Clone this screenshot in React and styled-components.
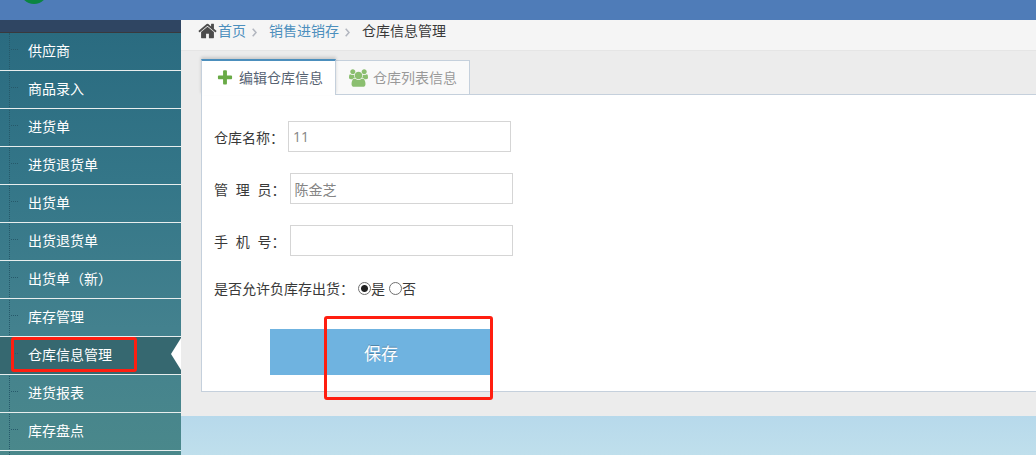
import React, { useState } from "react";
import styled, { createGlobalStyle } from "styled-components";

const menuItems = [
    "供应商",
    "商品录入",
    "进货单",
    "进货退货单",
    "出货单",
    "出货退货单",
    "出货单（新）",
    "库存管理",
    "仓库信息管理",
    "进货报表",
    "库存盘点",
];

function HomeIcon() {
    return (
        <svg width="19" height="20" viewBox="0 0 1664 1792" fill="#4c4c4c" aria-hidden="true">
            <path d="M1408 992v480q0 26-19 45t-45 19h-384v-384h-256v384h-384q-26 0-45-19t-19-45v-480q0-1 .5-3t.5-3l575-474 575 474q1 2 1 6zM1631 923l-62 74q-8 9-21 11h-3q-13 0-21-7l-692-577-692 577q-12 8-24 7-13-2-21-11l-62-74q-8-10-7-23.5t11-21.5l719-599q32-26 76-26t76 26l244 204v-195q0-14 9-23t23-9h192q14 0 23 9t9 23v408l219 182q10 8 11 21.5t-7 23.5z" />
        </svg>
    );
}

function PlusIcon() {
    return (
        <svg width="18" height="18" viewBox="0 0 1792 1792" fill="#69aa46" aria-hidden="true">
            <path d="M1600 736v192q0 40-28 68t-68 28h-416v416q0 40-28 68t-68 28h-192q-40 0-68-28t-28-68v-416h-416q-40 0-68-28t-28-68v-192q0-40 28-68t68-28h416v-416q0-40 28-68t68-28h192q40 0 68 28t28 68v416h416q40 0 68 28t28 68z" />
        </svg>
    );
}

function GroupIcon() {
    return (
        <svg width="19" height="18" viewBox="0 0 1920 1792" fill="#8bbf70" aria-hidden="true">
            <path d="M593 896q-162 5-265 128h-134q-82 0-138-40.5t-56-118.5q0-353 124-353 6 0 43.5 21t97.5 42.5 119 21.5q67 0 133-23-5 37-5 66 0 139 81 256zm1071 637q0 120-73 189.5t-194 69.5h-874q-121 0-194-69.5t-73-189.5q0-53 3.5-103.5t14-109 26.5-108.5 43-97.5 62-81 85.5-53.5 111.5-20q10 0 43 21.5t73 48 107 48 135 21.5 135-21.5 107-48 73-48 43-21.5q61 0 111.5 20t85.5 53.5 62 81 43 97.5 26.5 108.5 14 109 3.5 103.5zm-1024-1277q0 106-75 181t-181 75-181-75-75-181 75-181 181-75 181 75 75 181zm704 384q0 159-112.5 271.5t-271.5 112.5-271.5-112.5-112.5-271.5 112.5-271.5 271.5-112.5 271.5 112.5 112.5 271.5zm576 225q0 78-56 118.5t-138 40.5h-134q-103-123-265-128 81-117 81-256 0-29-5-66 66 23 133 23 59 0 119-21.5t97.5-42.5 43.5-21q124 0 124 353zm-128-609q0 106-75 181t-181 75-181-75-75-181 75-181 181-75 181 75 75 181z" />
        </svg>
    );
}

function Separator() {
    return (
        <SeparatorIcon width="5" height="9" viewBox="0 0 5 9" aria-hidden="true">
            <path d="M0.7 0.7L4 4.5L0.7 8.3" fill="none" stroke="#b2b6bf" strokeWidth="1.5" />
        </SeparatorIcon>
    );
}

function App() {
    const [name, setName] = useState("11");
    const [manager, setManager] = useState("陈金芝");
    const [phone, setPhone] = useState("");
    const [negative, setNegative] = useState("yes");

    return (
        <Page>
            <GlobalStyle />
            <TopBar>
                <svg width="28" height="4" viewBox="0 0 28 4" aria-hidden="true">
                    <circle cx="14" cy="-10" r="14" fill="#0b8540" />
                </svg>
            </TopBar>
            <Body>
                <Sidebar>
                    <SidebarHead />
                    <Menu>
                        {menuItems.map((item) => (
                            <MenuItem key={item} $active={item === "仓库信息管理"}>
                                <MenuLink href="#">{item}</MenuLink>
                                {item === "仓库信息管理" && <MenuMark />}
                            </MenuItem>
                        ))}
                    </Menu>
                </Sidebar>
                <Main>
                    <Breadcrumb>
                        <HomeIcon />
                        <a href="#">首页</a>
                        <Separator />
                        <a href="#">销售进销存</a>
                        <Separator />
                        <span>仓库信息管理</span>
                    </Breadcrumb>
                    <Content>
                        <Tabs>
                            <Tab type="button" $active>
                                <PlusIcon />
                                编辑仓库信息
                            </Tab>
                            <Tab type="button">
                                <GroupIcon />
                                仓库列表信息
                            </Tab>
                        </Tabs>
                        <Panel onSubmit={(e) => e.preventDefault()}>
                            <Field>
                                <label htmlFor="name">仓库名称：</label>
                                <TextInput id="name" value={name} onChange={(e) => setName(e.target.value)} />
                            </Field>
                            <Field>
                                <label htmlFor="manager">管&nbsp;&nbsp;理&nbsp;&nbsp;员：</label>
                                <TextInput id="manager" value={manager} onChange={(e) => setManager(e.target.value)} />
                            </Field>
                            <Field>
                                <label htmlFor="phone">手&nbsp;&nbsp;机&nbsp;&nbsp;号：</label>
                                <TextInput id="phone" value={phone} onChange={(e) => setPhone(e.target.value)} />
                            </Field>
                            <RadioField role="radiogroup" aria-labelledby="negative">
                                <span id="negative">是否允许负库存出货：</span>
                                <RadioLabel>
                                    <Radio name="negative" checked={negative === "yes"} onChange={() => setNegative("yes")} />
                                    是
                                </RadioLabel>
                                <RadioLabel>
                                    <Radio name="negative" checked={negative === "no"} onChange={() => setNegative("no")} />
                                    否
                                </RadioLabel>
                            </RadioField>
                            <Actions>
                                <SaveButton type="submit">保存</SaveButton>
                                <SaveMark />
                            </Actions>
                        </Panel>
                    </Content>
                    <Footer />
                </Main>
            </Body>
        </Page>
    );
}

export default App;

const GlobalStyle = createGlobalStyle`
    * {
        box-sizing: border-box;
    }
    body {
        margin: 0;
        color: #393939;
        font-family: "Open Sans", "Noto Sans CJK SC", sans-serif;
        font-size: 14px;
        line-height: 20px;
    }
    a {
        color: #4c8fbd;
        text-decoration: none;
    }
    button, input {
        font: inherit;
    }
`;

const Page = styled.div`
    display: flex;
    flex-direction: column;
    min-height: 100vh;
`;

const TopBar = styled.header`
    display: flex;
    align-items: flex-start;
    flex-shrink: 0;
    height: 20px;
    padding-left: 20px;
    background: #4f7cb8;
`;

const Body = styled.div`
    display: flex;
    flex: 1;
`;

const Sidebar = styled.nav`
    display: flex;
    flex-direction: column;
    flex-shrink: 0;
    width: 181px;
`;

const SidebarHead = styled.div`
    flex-shrink: 0;
    height: 13px;
    background: #2f4562;
    border-bottom: 1px solid #39393d;
`;

const Menu = styled.ul`
    position: relative;
    flex: 1;
    margin: 0;
    padding: 0;
    list-style: none;
    background: linear-gradient(#2a6b80, #347688 35%, #43818e 70%, #4a888b);

    &::before {
        content: "";
        position: absolute;
        top: 0;
        bottom: 0;
        left: 9px;
        border-left: 1px dotted #26596a;
    }
`;

const MenuItem = styled.li`
    position: relative;
    height: 38px;
    border-bottom: 1px solid #e8eeee;
    background: ${(props) => (props.$active ? "#366870" : "transparent")};

    &::before {
        content: "";
        position: absolute;
        top: 16px;
        left: 11px;
        width: 7px;
        border-top: 1px dotted #26596a;
    }

    &::after {
        content: "";
        display: ${(props) => (props.$active ? "block" : "none")};
        position: absolute;
        top: 1px;
        right: 0;
        border: solid transparent;
        border-width: 16px 10px 16px 0;
        border-right-color: #fff;
    }
`;

const MenuLink = styled.a`
    display: block;
    padding: 8px 0 9px 28px;
    color: #fff;
`;

const MenuMark = styled.div`
    position: absolute;
    top: 0;
    left: 11px;
    width: 126px;
    height: 35px;
    border: 3px solid #ff1e10;
    border-radius: 3px;
    pointer-events: none;
`;

const Main = styled.main`
    display: flex;
    flex-direction: column;
    flex: 1;
    min-width: 0;
    background: #ececec;
`;

const Breadcrumb = styled.nav`
    display: flex;
    align-items: center;
    flex-shrink: 0;
    height: 31px;
    padding: 0 0 8px 17px;
    background: #f5f5f5;
    border-bottom: 1px solid #e5e5e5;

    & a:first-of-type {
        margin-left: 1px;
    }
`;

const SeparatorIcon = styled.svg`
    margin: 2px 12px 0 6px;
`;

const Content = styled.div`
    padding: 8px 0 24px 20px;
`;

const Tabs = styled.div`
    display: flex;
    align-items: flex-end;
`;

const Tab = styled.button`
    position: relative;
    display: flex;
    align-items: center;
    gap: 5px;
    height: ${(props) => (props.$active ? "36px" : "34px")};
    margin-bottom: ${(props) => (props.$active ? "-1px" : "0")};
    padding: ${(props) => (props.$active ? "0 12px 0 14px" : "1px 12px 0 13px")};
    background: ${(props) => (props.$active ? "#fff" : "#f9f9f9")};
    color: ${(props) => (props.$active ? "#576373" : "#999")};
    border: 1px solid #c5d0dc;
    border-top: ${(props) => (props.$active ? "2px solid #4c8fbd" : "1px solid #c5d0dc")};
    border-left-width: ${(props) => (props.$active ? "1px" : "0")};
    border-bottom: 0;
    box-shadow: ${(props) => (props.$active ? "0 -2px 3px rgba(0, 0, 0, 0.15)" : "none")};
    z-index: ${(props) => (props.$active ? 1 : 0)};
`;

const Panel = styled.form`
    display: flex;
    flex-direction: column;
    padding: 26px 12px 16px;
    background: #fff;
    border: 1px solid #c5d0dc;
    border-right: 0;
`;

const Field = styled.div`
    display: flex;
    align-items: center;
    gap: 4px;
    margin-bottom: 21px;
    font-family: "Liberation Sans", "Noto Sans CJK SC", sans-serif;

    & label {
        padding-top: 2px;
    }
`;

const TextInput = styled.input`
    width: 223px;
    height: 31px;
    padding: 0 4px;
    color: #858585;
    background: #fff;
    border: 1px solid #d5d5d5;
    border-radius: 0;
    font-family: "Open Sans", "Noto Sans CJK SC", sans-serif;
`;

const RadioField = styled.div`
    display: flex;
    align-items: center;
    gap: 4px;
    margin-bottom: 30px;
    padding-top: 2px;
`;

const RadioLabel = styled.label`
    display: flex;
    align-items: center;
`;

const Radio = styled.input.attrs({ type: "radio" })`
    appearance: none;
    width: 13px;
    height: 13px;
    margin: 0 0 2px;
    border: 1px solid #707070;
    border-radius: 50%;
    background: #fff;

    &:checked {
        background: radial-gradient(circle, #222 3px, #fff 4px);
    }
`;

const Actions = styled.div`
    position: relative;
    display: flex;
    padding-left: 56px;
`;

const SaveButton = styled.button`
    width: 222px;
    height: 46px;
    padding-top: 4px;
    color: #fff;
    background: #6fb3e0;
    border: 0;
    font-size: 17px;
    text-shadow: 0 -1px 0 rgba(0, 0, 0, 0.25);
`;

const SaveMark = styled.div`
    position: absolute;
    top: -13px;
    left: 110px;
    width: 169px;
    height: 84px;
    border: 3px solid #ff1e10;
    border-radius: 3px;
    pointer-events: none;
`;

const Footer = styled.footer`
    flex: 1;
    background: linear-gradient(#b7d9eb, #bfdfec);
`;
